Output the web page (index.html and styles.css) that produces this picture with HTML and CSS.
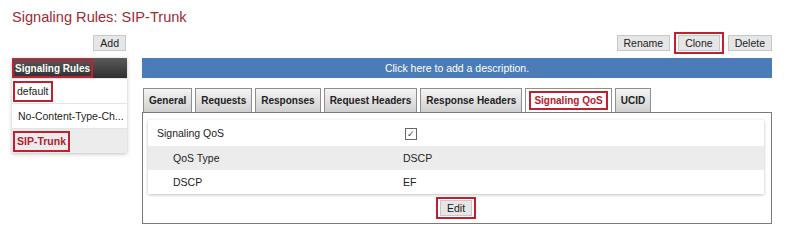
FILE: index.html
```html
<!DOCTYPE html>
<html lang="en">
<head>
    <meta charset="UTF-8">
    <title>Signaling Rules: SIP-Trunk</title>
    <link rel="stylesheet" href="styles.css">
</head>
<body>
    <h1 class="page-title">Signaling Rules: SIP-Trunk</h1>

    <div class="layout">
        <div class="sidebar">
            <div class="toolbar">
                <button class="btn">Add</button>
            </div>
            <div class="rule-list">
                <div class="rule-list-header"><span class="mark">Signaling Rules</span></div>
                <div class="rule-item marked"><span class="mark">default</span></div>
                <div class="rule-item">No-Content-Type-Ch...</div>
                <div class="rule-item marked selected"><span class="mark">SIP-Trunk</span></div>
            </div>
        </div>

        <div class="detail">
            <div class="toolbar">
                <button class="btn">Rename</button>
                <span class="mark-box"><button class="btn">Clone</button></span>
                <button class="btn">Delete</button>
            </div>
            <div class="description">Click here to add a description.</div>

            <div class="tabs">
                <div class="tab">General</div>
                <div class="tab">Requests</div>
                <div class="tab">Responses</div>
                <div class="tab">Request Headers</div>
                <div class="tab">Response Headers</div>
                <div class="tab active"><span class="mark">Signaling QoS</span></div>
                <div class="tab">UCID</div>
            </div>

            <div class="tab-body">
                <table class="props">
                    <tr>
                        <td class="label">Signaling QoS</td>
                        <td class="value"><span class="check">&#10003;</span></td>
                    </tr>
                    <tr class="shade">
                        <td class="label sub">QoS Type</td>
                        <td class="value">DSCP</td>
                    </tr>
                    <tr>
                        <td class="label sub">DSCP</td>
                        <td class="value">EF</td>
                    </tr>
                </table>
                <div class="actions">
                    <span class="mark-box"><button class="btn">Edit</button></span>
                </div>
            </div>
        </div>
    </div>
</body>
</html>
```

FILE: styles.css
```css
body {
    margin: 0;
    font-family: 'Liberation Sans', Arial, sans-serif;
    font-size: 10.5px;
    color: #222;
    background: #fff;
}

.page-title {
    margin: 7px 0 0 12px;
    font-size: 14.6px;
    line-height: 20px;
    font-weight: normal;
    color: #9e2a33;
}

.layout {
    display: flex;
    gap: 15px;
    padding: 0 18px 0 12px;
}

.sidebar {
    width: 115px;
}

.detail {
    flex: 1;
}

.toolbar {
    height: 31px;
    display: flex;
    justify-content: flex-end;
    align-items: center;
    gap: 4px;
}

.sidebar .toolbar {
    padding-right: 1px;
}

.btn {
    font-family: 'Liberation Sans', Arial, sans-serif;
    font-size: 10.5px;
    height: 16px;
    line-height: 14px;
    padding: 0 6px;
    background: #e6e6e6;
    border: 1px solid #c8c8c8;
    color: #222;
    border-radius: 0;
}

.mark {
    display: inline-block;
    border: 2px solid #c1202e;
    padding: 1px 2px;
    line-height: 13px;
}

.mark-box {
    display: inline-flex;
    border: 2px solid #c1202e;
    padding: 1px 2px;
}

.rule-list {
    box-shadow: 0 1px 4px rgba(0, 0, 0, 0.25);
}

.rule-list-header {
    height: 20px;
    display: flex;
    align-items: center;
    background: linear-gradient(#5a5a5a, #2f2f2f);
    color: #fff;
    font-size: 10px;
    font-weight: bold;
}

.rule-list-header .mark {
    height: 15px;
    padding: 0 1px;
    line-height: 15px;
}

.rule-item {
    height: 24px;
    display: flex;
    align-items: center;
    padding-left: 6px;
    border-top: 1px solid #e4e4e4;
    white-space: nowrap;
}

.rule-item.marked {
    padding-left: 1px;
}

.rule-item.marked .mark {
    padding: 2px 2px;
}

.rule-item.selected {
    background: #ececec;
    color: #b3202c;
    font-weight: bold;
}

.description {
    height: 20px;
    line-height: 20px;
    background: #4b7cb7;
    color: #fff;
    text-align: center;
}

.tabs {
    display: flex;
    gap: 3px;
    margin-top: 10px;
    padding-left: 1px;
}

.tab {
    height: 23px;
    display: flex;
    align-items: center;
    padding: 0 5px;
    border: 1px solid #8f8f8f;
    border-bottom: none;
    background: linear-gradient(#f4f4f4, #cfcfcf);
    font-size: 10px;
    font-weight: bold;
    color: #222;
}

.tab.active {
    background: #fff;
    padding: 0 3px;
    color: #b3202c;
}

.tab.active .mark {
    padding: 1px 3px;
}

.tab-body {
    border: 1px solid #7a7a7a;
    height: 112px;
    box-sizing: border-box;
    padding: 7px 7px 0 5px;
}

.props {
    width: 100%;
    table-layout: fixed;
    border-collapse: collapse;
    box-shadow: 0 1px 3px rgba(0, 0, 0, 0.25);
}

.props td {
    height: 24px;
    padding: 0;
}

.props tr:first-child td {
    height: 26px;
}

.props .shade td {
    background: #ececec;
}

.label {
    width: 246px;
    padding-left: 9px !important;
}

.label.sub {
    padding-left: 25px !important;
}

.check {
    display: inline-block;
    margin-left: 2px;
    width: 10px;
    height: 10px;
    border: 1px solid #666;
    font-size: 9px;
    line-height: 10px;
    text-align: center;
    color: #444;
}

.actions {
    display: flex;
    justify-content: center;
    margin-top: 3px;
}
```
